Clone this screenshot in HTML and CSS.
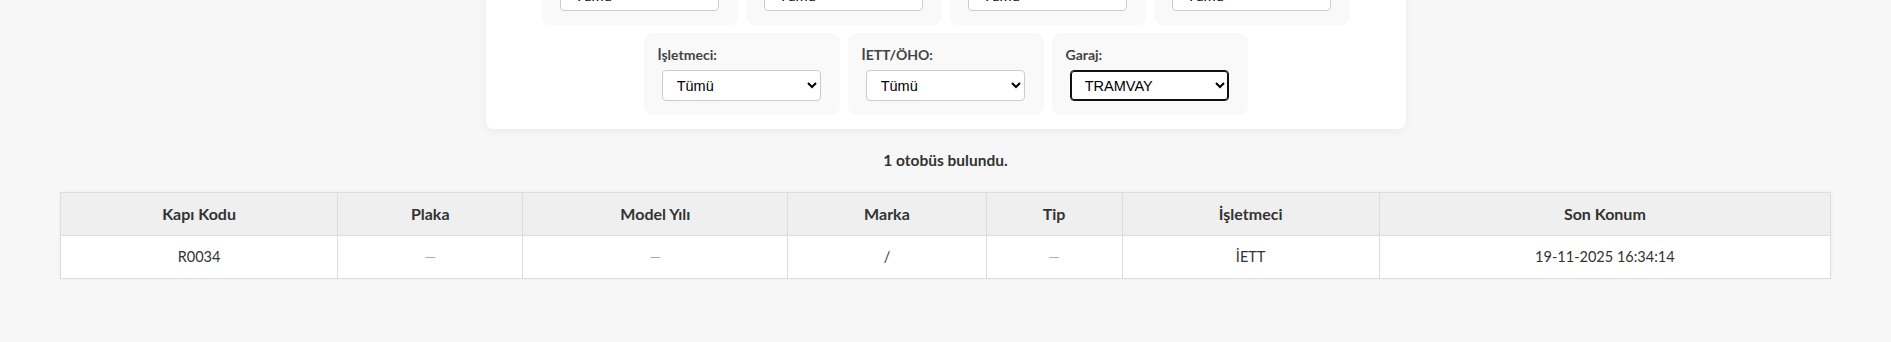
FILE: index.html
```html
<!DOCTYPE html>
<html lang="tr">
<head>
    <meta charset="UTF-8">
    <title>Otobüs Listesi</title>
    <link rel="stylesheet" href="styles.css">
</head>

<body>
    <div class="page">

        <h1 class="pageTitle">Otobüs Listesi</h1>

        <div class="filterCard">
            <div class="filterRow">
                <div class="filterGroup">
                    <label for="fKapi">Kapı Kodu:</label>
                    <select id="fKapi"><option>Tümü</option></select>
                </div>
                <div class="filterGroup">
                    <label for="fModel">Model Yılı:</label>
                    <select id="fModel"><option>Tümü</option></select>
                </div>
                <div class="filterGroup">
                    <label for="fMarka">Marka:</label>
                    <select id="fMarka"><option>Tümü</option></select>
                </div>
                <div class="filterGroup">
                    <label for="fTip">Tip:</label>
                    <select id="fTip"><option>Tümü</option></select>
                </div>
                <div class="filterGroup">
                    <label for="fIsletmeci">İşletmeci:</label>
                    <select id="fIsletmeci"><option>Tümü</option></select>
                </div>
                <div class="filterGroup">
                    <label for="fIett">İETT/ÖHO:</label>
                    <select id="fIett"><option>Tümü</option></select>
                </div>
                <div class="filterGroup">
                    <label for="fGaraj">Garaj:</label>
                    <select id="fGaraj" class="selectFocus">
                        <option>Tümü</option>
                        <option selected>TRAMVAY</option>
                    </select>
                </div>
            </div>
        </div>

        <p class="resultCount">1 otobüs bulundu.</p>

        <table class="busTable">
            <colgroup>
                <col style="width:277px">
                <col style="width:185px">
                <col style="width:265px">
                <col style="width:198px">
                <col style="width:136px">
                <col style="width:257px">
                <col style="width:451px">
            </colgroup>
            <thead>
                <tr>
                    <th>Kapı Kodu</th>
                    <th>Plaka</th>
                    <th>Model Yılı</th>
                    <th>Marka</th>
                    <th>Tip</th>
                    <th>İşletmeci</th>
                    <th>Son Konum</th>
                </tr>
            </thead>
            <tbody>
                <tr>
                    <td>R0034</td>
                    <td class="empty">—</td>
                    <td class="empty">—</td>
                    <td>/</td>
                    <td class="empty">—</td>
                    <td>İETT</td>
                    <td>19-11-2025 16:34:14</td>
                </tr>
            </tbody>
        </table>

    </div>
    <script src="scroll.js"></script>
</body>
</html>
```

FILE: styles.css
```css
/* genel ayarlar */
* {
    box-sizing: border-box;
}

body {
    margin: 0;
    background-color: #f7f7f7;
    color: #333;
    font-family: Lato, "Open Sans", sans-serif;
    font-size: 15px;
}

.page {
    padding: 20px 60px 63px;
}

.pageTitle {
    margin: 10px 0 20px;
    text-align: center;
    font-size: 26px;
}

/* filtre kutusu */
.filterCard {
    width: 920px;
    margin: 0 auto;
    padding: 15px 0 14px;
    background-color: #fff;
    border-radius: 8px;
    box-shadow: 0 2px 10px rgba(0, 0, 0, 0.05);
}

.filterRow {
    display: flex;
    flex-wrap: wrap;
    justify-content: center;
    gap: 8px;
}

.filterGroup {
    width: 196px;
    padding: 14px;
    background-color: #f9f9f9;
    border-radius: 9px;
}

.filterGroup label {
    display: block;
    margin-bottom: 7px;
    font-size: 14px;
    font-weight: 700;
    line-height: 16px;
    color: #444;
}

.filterGroup select {
    display: block;
    width: 95%;
    height: 31px;
    margin: 0 auto;
    padding: 0 10px;
    font-family: "Liberation Sans", Arial, sans-serif;
    font-size: 14.5px;
    color: #000;
    background-color: #fff;
    border: 1px solid #ccc;
    border-radius: 4px;
}

/* odaklanmış seçim kutusu */
.filterGroup select.selectFocus {
    border-color: #111;
    box-shadow: inset 0 0 0 1px #111;
}

.resultCount {
    margin: 21px 0 22px;
    text-align: center;
    font-size: 15.5px;
    font-weight: 700;
    line-height: 20px;
}

/* sonuç tablosu */
.busTable {
    width: 100%;
    table-layout: fixed;
    border-collapse: collapse;
    background-color: #fff;
    border: 1px solid #ddd;
    box-shadow: 0 0 4px rgba(0, 0, 0, 0.05);
}

.busTable th,
.busTable td {
    padding: 12px 8px;
    border: 1px solid #ddd;
    text-align: center;
    line-height: 18px;
}

.busTable th {
    background-color: #efefef;
    font-size: 16px;
    font-weight: 700;
    color: #333;
}

.busTable td {
    font-size: 14.5px;
    font-weight: 400;
}

.busTable td.empty {
    color: #aaa;
}
```

FILE: scroll.js
```js
// sayfanın en altına in
window.scrollTo(0, document.body.scrollHeight);
```
